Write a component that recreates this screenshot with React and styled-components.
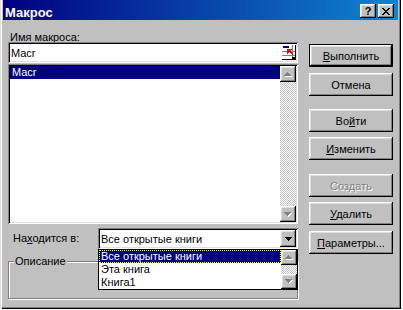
import React from "react";
import styled, { createGlobalStyle, css } from "styled-components";

const FACE = "#c0c0c0";
const NAVY = "#000080";

const GlobalStyle = createGlobalStyle`
  html, body {
    margin: 0;
    padding: 0;
    background: #fff;
  }
  body {
    font-family: "Liberation Sans", Arial, sans-serif;
    font-size: 11px;
    color: #000;
  }
`;

// win98 bevels
const raised = css`
  background: ${FACE};
  box-shadow: inset -1px -1px #000, inset 1px 1px #fff,
    inset -2px -2px #808080, inset 2px 2px #dfdfdf;
`;

const sunken = css`
  box-shadow: inset 1px 1px #808080, inset -1px -1px #fff,
    inset 2px 2px #000, inset -2px -2px #dfdfdf;
`;

const checker = css`
  background: repeating-conic-gradient(#fff 0 25%, ${FACE} 0 50%) 0 0 / 2px 2px;
`;

const Window = styled.div`
  width: 401px;
  height: 309px;
  box-sizing: border-box;
  padding: 0 3px 3px 3px;
  background: ${FACE};
  box-shadow: inset 1px 0 #dfdfdf, inset 2px 0 #fff, inset -1px -1px #000,
    inset -2px -2px #808080;
  display: flex;
  flex-direction: column;
`;

const TitleBar = styled.div`
  height: 20px;
  flex-shrink: 0;
  display: flex;
  align-items: flex-start;
  padding: 0 4px 0 2px;
  background: linear-gradient(to right, ${NAVY}, #1084d0);
`;

const Title = styled.div`
  flex: 1;
  padding-top: 5px;
  color: #fff;
  font-weight: bold;
  font-size: 13px;
  line-height: 15px;
`;

const TitleButton = styled.div`
  width: 16px;
  height: 14px;
  margin-top: 4px;
  margin-left: ${(p) => p.$gap || 0}px;
  box-sizing: border-box;
  ${raised};
  display: flex;
  align-items: center;
  justify-content: center;
  font-weight: bold;
  font-size: 11px;
  line-height: 14px;
`;

const Body = styled.div`
  flex: 1;
  display: flex;
  gap: 11px;
  padding: 11px 0 0 5px;
`;

const LeftColumn = styled.div`
  width: 290px;
  display: flex;
  flex-direction: column;
`;

const Label = styled.div`
  height: 11px;
  line-height: 13px;
  padding-left: 2px;
  white-space: nowrap;
`;

const TextInput = styled.div`
  height: 21px;
  box-sizing: border-box;
  padding: 2px;
  background: #fff;
  ${sunken};
  display: flex;
  align-items: center;
`;

const InputText = styled.div`
  flex: 1;
  align-self: flex-start;
  padding: 3px 0 0 1px;
  line-height: 13px;
`;

const ListBox = styled.div`
  height: 160px;
  margin-top: 1px;
  box-sizing: border-box;
  padding: 2px;
  background: #fff;
  ${sunken};
  display: flex;
`;

const Items = styled.div`
  flex: 1;
  min-width: 0;
`;

const Item = styled.div`
  height: 13px;
  line-height: 13px;
  box-sizing: border-box;
  padding-left: 2px;
  white-space: nowrap;
  overflow: hidden;
  background: ${(p) => (p.$selected ? NAVY : "transparent")};
  color: ${(p) => (p.$selected ? "#fff" : "#000")};
  ${(p) =>
    p.$focused &&
    css`
      border: 1px dotted #ffff00;
      padding-left: 1px;
      line-height: 11px;
    `}
`;

const ScrollBar = styled.div`
  width: 16px;
  display: flex;
  flex-direction: column;
`;

const ArrowButton = styled.div`
  height: ${(p) => p.$h || 16}px;
  flex-shrink: 0;
  box-sizing: border-box;
  ${raised};
  display: flex;
  align-items: center;
  justify-content: center;
`;

const Track = styled.div`
  flex: 1;
  ${checker};
`;

const LocationRow = styled.div`
  height: 21px;
  margin-top: 4px;
  display: flex;
  align-items: center;
`;

const LocationLabel = styled.div`
  flex: 1;
  padding-left: 5px;
  line-height: 13px;
`;

const Combo = styled.div`
  position: relative;
  width: 200px;
  height: 21px;
  box-sizing: border-box;
  padding: 2px;
  background: #fff;
  ${sunken};
  display: flex;
`;

const ComboText = styled.div`
  flex: 1;
  padding: 3px 0 0 1px;
  line-height: 13px;
  white-space: nowrap;
  overflow: hidden;
`;

const DropList = styled.div`
  position: absolute;
  top: 21px;
  left: 0;
  width: 200px;
  height: 41px;
  box-sizing: border-box;
  border: 1px solid #000;
  background: #fff;
  display: flex;
  z-index: 2;
`;

const Group = styled.fieldset`
  margin: 6px 0 0 0;
  padding: 0 0 0 5px;
  height: 44px;
  min-width: 0;
  box-sizing: border-box;
  border: 1px solid #808080;
  box-shadow: 1px 1px 0 #fff, inset 1px 1px 0 #fff;
`;

const Legend = styled.legend`
  padding: 0 1px;
  line-height: 13px;
  background: ${FACE};
`;

const ButtonColumn = styled.div`
  width: 84px;
  padding-top: 13px;
  display: flex;
  flex-direction: column;
`;

const DialogButton = styled.button`
  width: 84px;
  height: 23px;
  margin-top: ${(p) => p.$gap || 0}px;
  padding: 0;
  box-sizing: border-box;
  border: ${(p) => (p.$default ? "1px solid #000" : "none")};
  ${raised};
  font-family: "Liberation Sans", Arial, sans-serif;
  font-size: 11px;
  color: ${(p) => (p.disabled ? "#808080" : "#000")};
  text-shadow: ${(p) => (p.disabled ? "1px 1px 0 #fff" : "none")};
`;

const CLOSE = [
  "xx....xx",
  ".xx..xx.",
  "..xxxx..",
  "...xx...",
  "..xxxx..",
  ".xx..xx.",
  "xx....xx",
];
const UP = ["...x...", "..xxx..", ".xxxxx.", "xxxxxxx"];
const DOWN = [...UP].reverse();

function pixels(rows, color, dx = 0, dy = 0) {
  return rows.flatMap((r, y) =>
    r.split("").map((c, x) =>
      c === "x" ? (
        <rect key={`${color}${x}-${y}`} x={x + dx} y={y + dy} width={1} height={1} fill={color} />
      ) : null
    )
  );
}

function Glyph({ rows, disabled }) {
  const w = rows[0].length + (disabled ? 1 : 0);
  const h = rows.length + (disabled ? 1 : 0);
  return (
    <svg width={w} height={h} shapeRendering="crispEdges" style={{ display: "block" }}>
      {disabled && pixels(rows, "#fff", 1, 1)}
      {pixels(rows, disabled ? "#808080" : "#000")}
    </svg>
  );
}

function RefIcon() {
  return (
    <svg width="14" height="15" viewBox="0 0 14 15" shapeRendering="crispEdges" style={{ display: "block" }}>
      <rect x="0" y="6" width="14" height="1" fill="#808080" />
      <rect x="0" y="10" width="14" height="1" fill="#808080" />
      <rect x="10" y="0" width="1" height="15" fill="#808080" />
      <rect x="13" y="0" width="1" height="15" fill="#000" />
      <rect x="0" y="14" width="14" height="1" fill="#000" />
      <rect x="1" y="1" width="6" height="2" fill={NAVY} />
      <path d="M5 4h5l-2 2 3 3-1 1-3-3-2 2z" fill="#f00" />
      <rect x="10" y="12" width="3" height="2" fill="#000" />
    </svg>
  );
}

function VScroll({ h }) {
  return (
    <ScrollBar>
      <ArrowButton $h={h}>
        <Glyph rows={UP} disabled />
      </ArrowButton>
      <Track />
      <ArrowButton $h={h}>
        <Glyph rows={DOWN} disabled />
      </ArrowButton>
    </ScrollBar>
  );
}

export default function App() {
  return (
    <>
      <GlobalStyle />
      <Window>
        <TitleBar>
          <Title>Макрос</Title>
          <TitleButton>?</TitleButton>
          <TitleButton $gap={2}>
            <Glyph rows={CLOSE} />
          </TitleButton>
        </TitleBar>
        <Body>
          <LeftColumn>
            <Label>
              Им<u>я</u> макроса:
            </Label>
            <TextInput>
              <InputText>Macr</InputText>
              <RefIcon />
            </TextInput>
            <ListBox>
              <Items>
                <Item $selected>Macr</Item>
              </Items>
              <VScroll h={16} />
            </ListBox>
            <LocationRow>
              <LocationLabel>
                На<u>х</u>одится в:
              </LocationLabel>
              <Combo>
                <ComboText>Все открытые книги</ComboText>
                <ArrowButton style={{ width: 16, height: "auto" }}>
                  <Glyph rows={DOWN} />
                </ArrowButton>
                <DropList>
                  <Items>
                    <Item $selected $focused>
                      Все открытые книги
                    </Item>
                    <Item>Эта книга</Item>
                    <Item>Книга1</Item>
                  </Items>
                  <VScroll h={15} />
                </DropList>
              </Combo>
            </LocationRow>
            <Group>
              <Legend>Описание</Legend>
            </Group>
          </LeftColumn>
          <ButtonColumn>
            <DialogButton $default>
              <u>В</u>ыполнить
            </DialogButton>
            <DialogButton $gap={6}>Отмена</DialogButton>
            <DialogButton $gap={13}>
              Во<u>й</u>ти
            </DialogButton>
            <DialogButton $gap={5}>
              <u>И</u>зменить
            </DialogButton>
            <DialogButton $gap={14} disabled>
              Создать
            </DialogButton>
            <DialogButton $gap={5}>
              <u>У</u>далить
            </DialogButton>
            <DialogButton $gap={6}>
              <u>П</u>араметры...
            </DialogButton>
          </ButtonColumn>
        </Body>
      </Window>
    </>
  );
}
